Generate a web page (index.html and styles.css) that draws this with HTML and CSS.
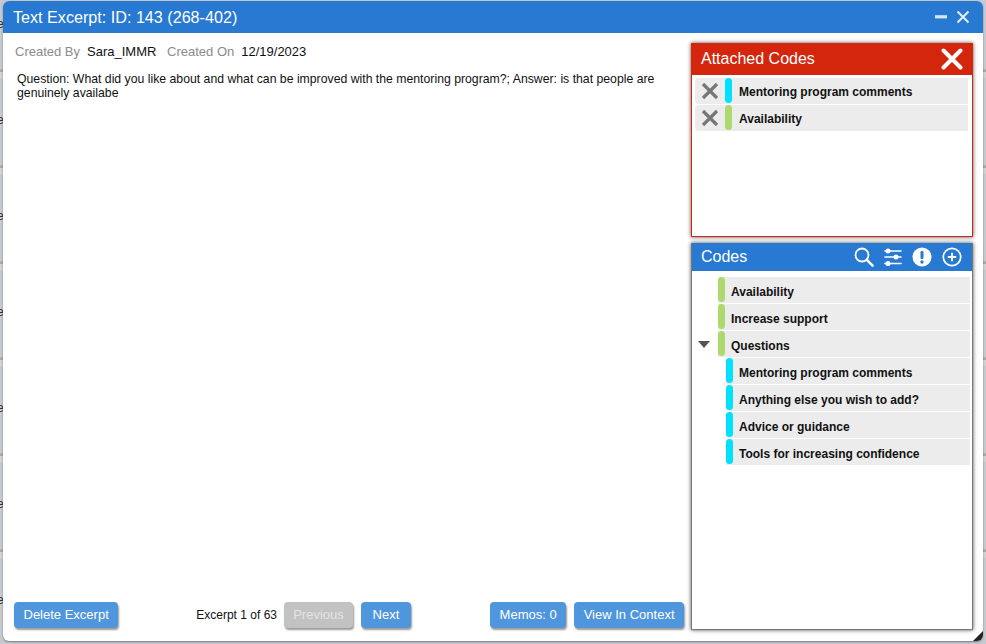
FILE: index.html
```html
<!DOCTYPE html>
<html lang="en">
<head>
<meta charset="utf-8">
<title>Text Excerpt</title>
<link rel="stylesheet" href="styles.css">
</head>
<body>
<div class="backdrop">
  <div class="bg-row"><span class="bg-e">e</span></div>
  <div class="bg-row"><span class="bg-e">e</span></div>
  <div class="bg-row"><span class="bg-e">e</span></div>
  <div class="bg-row"><span class="bg-e">e</span></div>
  <div class="bg-row"><span class="bg-e">e</span></div>
  <div class="bg-row"><span class="bg-e">e</span></div>
  <div class="bg-row"><span class="bg-e">e</span></div>
</div>
<section class="dialog">
  <header class="titlebar">
    <h1 class="title">Text Excerpt: ID: 143 (268-402)</h1>
    <div class="win-controls">
      <svg class="win-icon" width="14" height="14" viewBox="0 0 14 14"><rect x="1" y="5.2" width="12" height="3.2" fill="#d6e6f7"/></svg>
      <svg class="win-icon" width="14" height="14" viewBox="0 0 14 14"><path d="M1.5 1.5L12.5 12.5M12.5 1.5L1.5 12.5" stroke="#e3eefa" stroke-width="2" fill="none"/></svg>
    </div>
  </header>
  <div class="body">
    <main class="main">
      <div class="meta">
        <span class="meta-label">Created By</span><span class="meta-value meta-gap">Sara_IMMR</span>
        <span class="meta-label">Created On</span><span class="meta-value">12/19/2023</span>
      </div>
      <p class="excerpt">Question: What did you like about and what can be improved with the mentoring program?; Answer: is that people are genuinely availabe</p>
      <div class="actions">
        <button class="btn">Delete Excerpt</button>
        <div class="pager">
          <span class="count">Excerpt 1 of 63</span>
          <button class="btn btn-disabled">Previous</button>
          <button class="btn btn-next">Next</button>
        </div>
        <div class="actions-right">
          <button class="btn">Memos: 0</button>
          <button class="btn">View In Context</button>
        </div>
      </div>
    </main>
    <aside class="side">
      <section class="panel panel-attached">
        <header class="panel-head head-red">
          <h2 class="panel-title">Attached Codes</h2>
          <svg width="22" height="22" viewBox="0 0 22 22"><path d="M2.5 2.5L19.5 19.5M19.5 2.5L2.5 19.5" stroke="#fff" stroke-width="4" stroke-linecap="round" fill="none"/></svg>
        </header>
        <ul class="attached-list">
          <li class="attached-row">
            <svg class="remove" width="18" height="18" viewBox="0 0 18 18"><path d="M2 2L16 16M16 2L2 16" stroke="#777" stroke-width="3.2" fill="none"/></svg>
            <span class="bar bar-cyan"></span><span class="code-name code-attached">Mentoring program comments</span>
          </li>
          <li class="attached-row">
            <svg class="remove" width="18" height="18" viewBox="0 0 18 18"><path d="M2 2L16 16M16 2L2 16" stroke="#777" stroke-width="3.2" fill="none"/></svg>
            <span class="bar bar-green"></span><span class="code-name code-attached">Availability</span>
          </li>
        </ul>
      </section>
      <section class="panel panel-codes">
        <header class="panel-head head-blue">
          <h2 class="panel-title">Codes</h2>
          <div class="tools">
            <svg width="20" height="20" viewBox="0 0 20 20"><circle cx="8" cy="8" r="6.5" stroke="#fff" stroke-width="1.8" fill="none"/><path d="M12.8 12.8L18.6 18.6" stroke="#fff" stroke-width="2.6" stroke-linecap="round"/></svg>
            <svg width="18" height="20" viewBox="0 0 18 20"><path d="M1 4H17M1 10H17M1 16.5H17" stroke="#fff" stroke-width="1.6" stroke-linecap="round"/><circle cx="4" cy="4" r="2.5" fill="#fff"/><circle cx="12" cy="10" r="2.5" fill="#fff"/><circle cx="4" cy="16.5" r="2.5" fill="#fff"/></svg>
            <svg width="20" height="20" viewBox="0 0 20 20"><circle cx="10" cy="10" r="9.5" fill="#fff"/><rect x="8.5" y="4" width="3" height="8" rx="1.2" fill="#2779d2"/><circle cx="10" cy="15" r="1.7" fill="#2779d2"/></svg>
            <svg width="20" height="20" viewBox="0 0 20 20"><circle cx="10" cy="10" r="8.7" stroke="#fff" stroke-width="1.7" fill="none"/><path d="M10 5.8V14.2M5.8 10H14.2" stroke="#fff" stroke-width="1.8"/></svg>
          </div>
        </header>
        <ul class="tree">
          <li class="tree-row level-1"><span class="bar bar-green"></span><span class="code-name">Availability</span></li>
          <li class="tree-row level-1"><span class="bar bar-green"></span><span class="code-name">Increase support</span></li>
          <li class="tree-row level-1"><span class="caret"></span><span class="bar bar-green"></span><span class="code-name">Questions</span></li>
          <li class="tree-row level-2"><span class="bar bar-cyan"></span><span class="code-name">Mentoring program comments</span></li>
          <li class="tree-row level-2"><span class="bar bar-cyan"></span><span class="code-name">Anything else you wish to add?</span></li>
          <li class="tree-row level-2"><span class="bar bar-cyan"></span><span class="code-name">Advice or guidance</span></li>
          <li class="tree-row level-2"><span class="bar bar-cyan"></span><span class="code-name">Tools for increasing confidence</span></li>
        </ul>
      </section>
    </aside>
  </div>
  <span class="grip"></span>
</section>
</body>
</html>
```
FILE: styles.css
```css
* { box-sizing: border-box; }
html, body { margin: 0; padding: 0; height: 100%; overflow: hidden; }
body { font-family: "Liberation Sans", Arial, sans-serif; background: #d0d0d0; position: relative; }
ul { list-style: none; margin: 0; padding: 0; }
h1, h2, p { margin: 0; font-weight: 400; }

.backdrop { height: 644px; overflow: hidden; background: #c8c8c8; }
.bg-row { height: 96px; border-top: 2px solid #a8a8a8; border-bottom: 1px solid #b4b4b4; font-size: 12px; line-height: 14px; color: #333; padding: 41px 0 0 0; background: linear-gradient(#d4d4d4 6px, #c6cad0 6px); }
.bg-row:first-child { margin-top: -26px; }
.bg-e { margin-left: -3px; }

.dialog { position: absolute; left: 3px; top: 1px; width: 980px; height: 640px; background: #fff; border-radius: 6px; display: flex; flex-direction: column; overflow: hidden; box-shadow: 0 1px 2px rgba(0,0,0,.4); }
.titlebar { height: 32px; flex: none; background: #2779d2; display: flex; align-items: center; justify-content: space-between; padding: 0 13px 0 10px; }
.title { color: #fff; font-size: 16.15px; line-height: 30px; }
.win-controls { display: flex; gap: 8px; }
.win-icon { display: block; }

.body { flex: 1; display: flex; min-height: 0; }
.main { width: 688px; flex: none; display: flex; flex-direction: column; padding: 0 7px 13px 11px; }
.meta { font-size: 13px; line-height: 15px; padding: 11px 0 0 1px; color: #111; }
.meta-label { color: #8b8b8b; margin-right: 7px; }
.meta-value { color: #111; }
.meta-gap { margin-right: 7px; }
.excerpt { font-size: 12.25px; line-height: 14px; color: #111; margin: 13px 0 0 3px; flex: 1; width: 645px; }
.actions { display: flex; align-items: center; }
.pager { display: flex; align-items: center; margin-left: 78px; }
.count { font-size: 12px; color: #111; margin-right: 7px; }
.pager .btn + .btn { margin-left: 8px; }
.actions-right { display: flex; gap: 8px; margin-left: auto; }
.btn { height: 26px; border: 0; border-radius: 4px; background: #5096dc; color: #fff; font: 13px "Liberation Sans", Arial, sans-serif; padding: 0 9.5px 2px; box-shadow: 1px 2px 2px rgba(0,0,0,.4); }
.btn-disabled { background: #c2c2c2; color: #e4e4e4; width: 69px; padding: 0 0 2px; }
.btn-next { width: 50px; padding: 0 0 2px; }

.side { flex: 1; display: flex; flex-direction: column; gap: 6px; padding: 10px 10px 11px 0; }
.panel { background: #fff; box-shadow: 0 0 4px rgba(0,0,0,.7); }
.panel-attached { height: 194px; flex: none; border: 1px solid #d4260c; border-top: 0; }
.panel-codes { flex: 1; border: 1px solid #777; border-top: 0; }
.panel-head { display: flex; align-items: center; justify-content: space-between; color: #fff; }
.head-red { height: 32px; background: #d4260c; padding: 0 9px; }
.head-blue { height: 28px; background: #2779d2; padding: 0 10px 0 9px; }
.panel-title { font-size: 16px; line-height: 20px; }
.tools { display: flex; gap: 10px; align-items: center; }

.attached-list { padding: 3px 4px 0 3px; }
.attached-row { height: 26px; margin-bottom: 1px; background: #ececec; border-radius: 4px 0 0 4px; display: flex; align-items: center; padding-left: 6px; }
.remove { flex: none; margin-right: 6px; }
.bar { flex: none; align-self: flex-start; width: 7px; height: 25px; border-radius: 4px; }
.bar-cyan { background: #00e0ff; }
.bar-green { background: #aed96f; }
.code-name { font-size: 12px; font-weight: 700; color: #111; margin-left: 6px; padding-top: 4px; }
.attached-row .code-attached { margin-left: 7px; padding-top: 2px; }

.tree { padding: 6px 2px 0 0; }
.tree-row { position: relative; height: 26px; margin-bottom: 1px; background: #ececec; display: flex; align-items: center; }
.level-1 { margin-left: 26px; }
.level-2 { margin-left: 34px; }
.caret { position: absolute; left: -20px; top: 10px; width: 0; height: 0; border-left: 6px solid transparent; border-right: 6px solid transparent; border-top: 7px solid #555; }

.grip { position: absolute; right: 0; bottom: 0; width: 0; height: 0; border-left: 10px solid transparent; border-bottom: 10px solid #222; }
```
